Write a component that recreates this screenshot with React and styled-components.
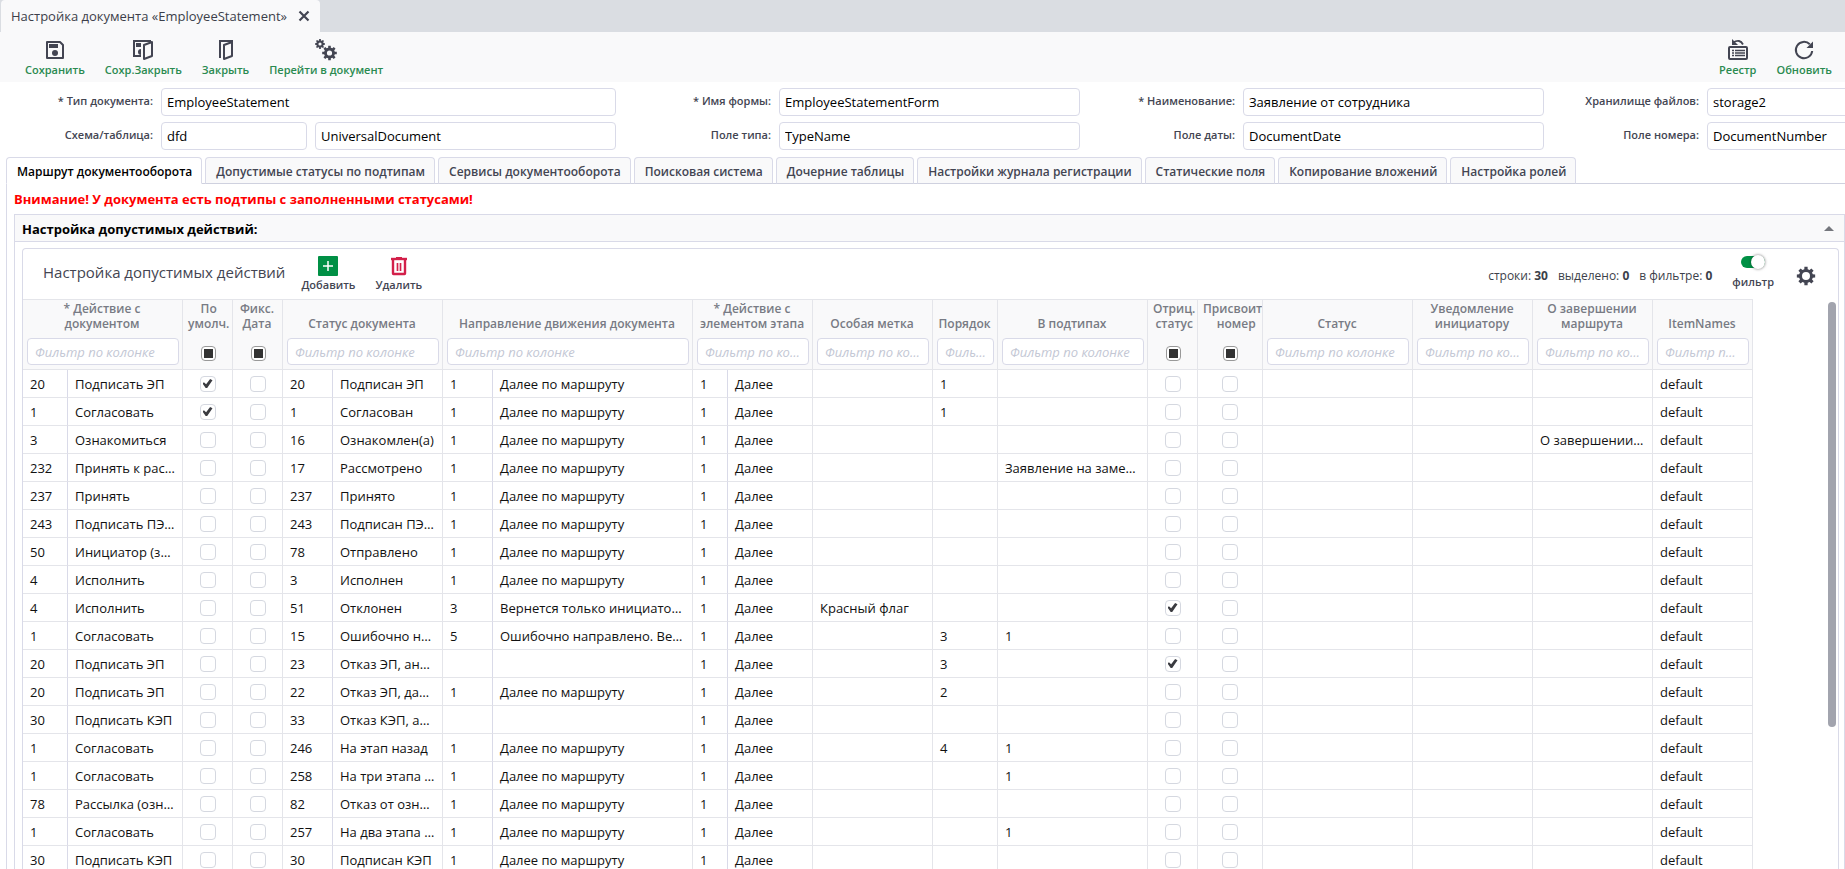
import React, { useId, useRef, useEffect, useState } from 'react';
import styled, { createGlobalStyle, css } from 'styled-components';

const GlobalStyle = createGlobalStyle`
  *, *::before, *::after { box-sizing: border-box; }
  body { margin: 0; background: #fff; color: #3c3f4a; font: 13px/18px "Open Sans", "Noto Sans", sans-serif; overflow: hidden; }
  button, input { font-family: inherit; }
`;

const line = '#d9dae8';
const gridLine = '#e4e5ea';
const ink = '#434552';
const shade = '#f9f9fa';

const Page = styled.div`
  display: flex;
  flex-direction: column;
  height: 100vh;
  overflow: hidden;
`;

/* ---------- window tab and toolbar ---------- */

const WindowTabs = styled.div`
  display: flex;
  flex: none;
  height: 32px;
  padding-left: 1px;
  background: #dadde2;
`;

const WindowTab = styled.div`
  display: flex;
  align-items: center;
  gap: 11px;
  padding: 0 10px;
  background: ${shade};
  border-radius: 4px 4px 0 0;
  white-space: nowrap;
`;

const CloseButton = styled.button`
  display: flex;
  padding: 0;
  border: 0;
  background: none;
  color: ${ink};
`;

const Toolbar = styled.div`
  display: flex;
  flex: none;
  justify-content: space-between;
  height: 50px;
  padding: 7px 3px 0 15px;
  background: ${shade};
`;

const ButtonGroup = styled.div`
  display: flex;
`;

const ToolButton = styled.button`
  display: flex;
  flex-direction: column;
  align-items: center;
  gap: 1px;
  padding: 0 10px;
  border: 0;
  background: none;
  color: ${p => (p.$plain ? ink : '#2a8a50')};
  font-size: 11px;
  font-weight: 600;
  line-height: 16px;
  white-space: nowrap;
  svg { color: ${ink}; }
`;

/* ---------- document form ---------- */

const Form = styled.form`
  display: grid;
  flex: none;
  grid-template-columns: 616px 464px 464px minmax(464px, 1fr);
  row-gap: 6px;
  padding: 6px 0 7px;
`;

const FieldBox = styled.div`
  display: flex;
  gap: 8px;
`;

const FieldLabel = styled.label`
  flex: none;
  width: ${p => (p.$first ? 153 : 155)}px;
  color: ${ink};
  font-size: 11px;
  font-weight: 600;
  line-height: 26px;
  text-align: right;
`;

const TextInput = styled.input`
  flex: ${p => (p.$width ? 'none' : 1)};
  width: ${p => (p.$width ? `${p.$width}px` : 'auto')};
  min-width: 0;
  height: 28px;
  padding: 0 5px;
  border: 1px solid ${line};
  border-radius: 4px;
  background: #fff;
  color: #000;
  font-size: 13px;
  outline: 0;
`;

/* ---------- tabs ---------- */

const TabList = styled.div`
  display: flex;
  flex: none;
  gap: 3px;
  height: 27px;
  margin-left: 6px;
  box-shadow: inset 0 -1px #cfd1df;
`;

const Tab = styled.button`
  padding: 2px 9px 0 10px;
  border: 1px solid ${line};
  border-bottom-color: #cfd1df;
  border-radius: 4px 4px 0 0;
  background: ${shade};
  color: ${ink};
  font-size: 12px;
  font-weight: 600;
  line-height: 24px;
  white-space: nowrap;
  ${p => p.$active && css`
    border-bottom-color: #fff;
    background: #fff;
    color: #000;
  `}
`;

const TabPanel = styled.div`
  display: flex;
  flex: 1;
  flex-direction: column;
  min-height: 0;
  margin-left: 6px;
  padding-left: 7px;
  border-left: 1px solid ${line};
`;

const Warning = styled.p`
  flex: none;
  height: 30px;
  margin: 0;
  color: #f00;
  font-weight: 700;
  line-height: 30px;
`;

const Section = styled.section`
  display: flex;
  flex: 1;
  flex-direction: column;
  min-height: 0;
  border: 1px solid ${line};
  border-bottom: 0;
`;

const SectionHeader = styled.header`
  display: flex;
  flex: none;
  align-items: center;
  justify-content: space-between;
  height: 27px;
  padding: 0 10px 0 7px;
  border-bottom: 1px solid ${line};
  background: ${shade};
`;

const SectionTitle = styled.h2`
  margin: 0;
  padding-top: 1px;
  color: #000;
  font-size: 13px;
  line-height: 18px;
`;

const Grid = styled.div`
  display: flex;
  flex: 1;
  flex-direction: column;
  min-height: 0;
  margin: 6px 5px 0 7px;
  border: 1px solid ${line};
  border-bottom: 0;
  border-radius: 4px 4px 0 0;
`;

const GridBar = styled.div`
  display: flex;
  flex: none;
  align-items: flex-start;
  height: 50px;
  padding: 7px 22px 0 20px;
`;

const GridTitle = styled.h3`
  margin: 0 6px 0 0;
  color: ${ink};
  font-size: 15px;
  font-weight: 400;
  line-height: 32px;
  white-space: nowrap;
`;

const GridStatus = styled.div`
  display: flex;
  gap: 10px;
  margin-left: auto;
  font-size: 12px;
  line-height: 40px;
  white-space: nowrap;
`;

const SwitchLabel = styled.label`
  display: flex;
  flex-direction: column;
  align-items: center;
  gap: 6px;
  margin: 0 22px 0 20px;
  color: ${ink};
  font-size: 11px;
  font-weight: 600;
  line-height: 16px;
`;

const Switch = styled.input`
  display: flex;
  align-items: center;
  justify-content: flex-end;
  appearance: none;
  width: 24px;
  height: 12px;
  margin: 0;
  border-radius: 6px;
  background: #009045;
  &::after {
    content: "";
    flex: none;
    width: 14px;
    height: 14px;
    border-radius: 50%;
    background: #fff;
    box-shadow: 0 0 3px #0008;
  }
`;

const IconButton = styled.button`
  display: flex;
  padding: ${p => (p.$low ? '10px 0 0' : '0')};
  border: 0;
  background: none;
  color: ${ink};
`;

/* ---------- table ---------- */

const GridBody = styled.div`
  display: flex;
  flex: 1;
  justify-content: space-between;
  min-height: 0;
  overflow: hidden;
`;

const Table = styled.table`
  flex: none;
  align-self: flex-start;
  width: 1730px;
  table-layout: fixed;
  border-spacing: 0;
`;

const HeadCell = styled.th`
  height: 71px;
  padding: 0 3px 4px 4px;
  border: solid ${gridLine};
  border-width: 1px 1px 1px 0;
  background: ${shade};
  color: #787b84;
  font-size: 12px;
  font-weight: 600;
  line-height: 15px;
  vertical-align: bottom;
  overflow: hidden;
`;

const HeadText = styled.div`
  min-width: min-content;
  margin: 0 3px 7px 1px;
  white-space: pre-line;
`;

const FilterSlot = styled.div`
  display: flex;
  align-items: center;
  justify-content: center;
  height: 27px;
  padding-top: ${p => (p.$check ? 4 : 0)}px;
`;

const FilterInput = styled.input`
  width: 100%;
  min-width: 0;
  height: 27px;
  padding: 0 6px 0 7px;
  border: 1px solid ${line};
  border-radius: 4px;
  background: #fff;
  font-size: 13px;
  text-overflow: ellipsis;
  outline: 0;
  &::placeholder { color: #c3c7d4; font-style: italic; opacity: 1; }
`;

const CheckBase = styled.input`
  display: flex;
  align-items: center;
  justify-content: center;
  appearance: none;
  width: 16px;
  height: 16px;
  margin: 0 auto;
  border: 1px solid #d5d8e0;
  border-radius: 4px;
  background: #fff;
  &:checked::after {
    content: "";
    width: 10px;
    height: 9px;
    background: #3a3b40;
    clip-path: polygon(0 51%, 14% 36%, 36% 58%, 76% 0, 100% 14%, 47% 100%, 32% 100%);
  }
  &:indeterminate {
    width: 15px;
    height: 15px;
    margin: 0;
    border-color: #999;
  }
  &:indeterminate::after {
    content: "";
    width: 9px;
    height: 9px;
    background: #333;
  }
`;

const Cell = styled.td`
  height: 28px;
  padding: ${p => (p.$check ? '0' : '1px 7px 0')};
  border: solid ${gridLine};
  border-width: 0 1px 1px 0;
  border-right-color: ${p => (p.$code ? line : gridLine)};
  color: #111;
  line-height: 18px;
  white-space: nowrap;
  overflow: hidden;
`;

const ScrollTrack = styled.div`
  flex: none;
  width: 10px;
  padding-top: 3px;
`;

const ScrollThumb = styled.div`
  width: 8px;
  height: 75%;
  border-radius: 4px;
  background: #a2a4ae;
`;

/* ---------- icons ---------- */

function gearPath(cx, cy, teeth, outer, inner, hole) {
  const pts = [];
  const step = (Math.PI * 2) / teeth;
  for (let i = 0; i < teeth; i++) {
    const a = i * step - Math.PI / 2;
    [[-0.31, inner], [-0.22, outer], [0.22, outer], [0.31, inner]].forEach(([o, r]) => {
      pts.push(`${(cx + r * Math.cos(a + o * step)).toFixed(2)} ${(cy + r * Math.sin(a + o * step)).toFixed(2)}`);
    });
  }
  return `M${pts.join('L')}ZM${cx - hole} ${cy}a${hole} ${hole} 0 1 0 ${hole * 2} 0a${hole} ${hole} 0 1 0 ${-hole * 2} 0Z`;
}

const Svg = ({ size = 22, children }) => (
  <svg width={size} height={size} viewBox={`0 0 ${size} ${size}`} fill="none" stroke="currentColor" strokeWidth="2" aria-hidden="true">
    {children}
  </svg>
);

const SaveIcon = () => (
  <Svg>
    <path d="M3 3H16L19 6V19H3Z" strokeLinejoin="round" />
    <path d="M5 5h9v4H5z" fill="currentColor" stroke="none" />
    <circle cx="11" cy="14" r="3" fill="currentColor" stroke="none" />
  </Svg>
);

const SaveCloseIcon = () => (
  <Svg>
    <path d="M19 2H2V17H9" />
    <path d="M4 4h5v4H4zM9 10a3 3 0 0 0 0 6z" fill="currentColor" stroke="none" />
    <path d="M12 6L20 3V17L12 20Z" fill="#f9f9fa" strokeLinejoin="round" />
  </Svg>
);

const DoorIcon = () => (
  <Svg>
    <path d="M5 19V2H18" />
    <path d="M9 6L17 3V17L9 20Z" strokeLinejoin="round" />
  </Svg>
);

const GearsIcon = () => (
  <Svg>
    <g fill="currentColor" stroke="none" fillRule="evenodd">
      <path d={gearPath(5, 5, 8, 5, 3.7, 1.6)} />
      <path d={gearPath(14.5, 14, 8, 7.4, 5.5, 2.6)} />
    </g>
  </Svg>
);

const RegistryIcon = () => (
  <Svg>
    <rect x="2" y="8" width="18" height="12" rx="1" />
    <path d="M5 11.5h2M8 11.5h10M5 14h2M8 14h10M5 16.5h2M8 16.5h10" strokeWidth="1.3" />
    <path d="M6 3.5Q13 -0.5 16 5.5" strokeWidth="1.8" />
    <path d="M5 0V6H11Z" fill="currentColor" stroke="none" />
  </Svg>
);

const RefreshIcon = () => (
  <Svg>
    <path d="M16.8 5.2A8.2 8.2 0 1 0 19.2 12" />
    <path d="M20 2.500V9H13.500Z" fill="currentColor" stroke="none" />
  </Svg>
);

const AddIcon = () => (
  <Svg size={20}>
    <rect width="20" height="20" rx="1" fill="#009045" stroke="none" />
    <path d="M10 5v10M5 10h10" stroke="#fff" strokeWidth="1.5" />
  </Svg>
);

const TrashIcon = () => (
  <Svg size={20}>
    <g stroke="#d3204a">
      <path d="M2 3H18" strokeWidth="2.400" />
      <path d="M7 2H13" />
      <path d="M4 4V17.500Q4 18 4.500 18H15.500Q16 18 16 17.500V4" strokeWidth="2.400" />
      <path d="M8.500 7V15M11.500 7V15" strokeWidth="1.700" />
    </g>
  </Svg>
);

const GearIcon = () => (
  <Svg size={20}>
    <path d={gearPath(10, 10, 8, 9.3, 7, 4)} fill="currentColor" stroke="none" fillRule="evenodd" />
  </Svg>
);

/* ---------- data ---------- */

const formFields = [
  [['* Тип документа:', ['EmployeeStatement']], ['* Имя формы:', ['EmployeeStatementForm']], ['* Наименование:', ['Заявление от сотрудника']], ['Хранилище файлов:', ['storage2']]],
  [['Схема/таблица:', ['dfd', 'UniversalDocument']], ['Поле типа:', ['TypeName']], ['Поле даты:', ['DocumentDate']], ['Поле номера:', ['DocumentNumber']]],
];

const tabs = [
  'Маршрут документооборота', 'Допустимые статусы по подтипам', 'Сервисы документооборота',
  'Поисковая система', 'Дочерние таблицы', 'Настройки журнала регистрации',
  'Статические поля', 'Копирование вложений', 'Настройка ролей',
];

const columns = [
  { title: '* Действие с\nдокументом', widths: [45, 115] },
  { title: 'По\nумолч.', widths: [50], check: true },
  { title: 'Фикс.\nДата', widths: [50], check: true },
  { title: 'Статус документа', widths: [50, 110] },
  { title: 'Направление движения документа', widths: [50, 200] },
  { title: '* Действие с\nэлементом этапа', widths: [35, 85] },
  { title: 'Особая метка', widths: [120] },
  { title: 'Порядок', widths: [65] },
  { title: 'В подтипах', widths: [150] },
  { title: 'Отриц.\nстатус', widths: [50], check: true },
  { title: 'Присвоить\nномер', widths: [65], check: true },
  { title: 'Статус', widths: [150] },
  { title: 'Уведомление\nинициатору', widths: [120] },
  { title: 'О завершении\nмаршрута', widths: [120] },
  { title: 'ItemNames', widths: [100] },
];

const row = (code, action, statusCode, status, dirCode, dir, extra = {}) => ({ code, action, statusCode, status, dirCode, dir, ...extra });
const onward = ['1', 'Далее по маршруту'];

const rows = [
  row('20', 'Подписать ЭП', '20', 'Подписан ЭП', ...onward, { byDefault: true, order: '1' }),
  row('1', 'Согласовать', '1', 'Согласован', ...onward, { byDefault: true, order: '1' }),
  row('3', 'Ознакомиться', '16', 'Ознакомлен(а)', ...onward, { finish: 'О завершении…' }),
  row('232', 'Принять к рас…', '17', 'Рассмотрено', ...onward, { subtypes: 'Заявление на заме…' }),
  row('237', 'Принять', '237', 'Принято', ...onward),
  row('243', 'Подписать ПЭ…', '243', 'Подписан ПЭ…', ...onward),
  row('50', 'Инициатор (з…', '78', 'Отправлено', ...onward),
  row('4', 'Исполнить', '3', 'Исполнен', ...onward),
  row('4', 'Исполнить', '51', 'Отклонен', '3', 'Вернется только инициато…', { mark: 'Красный флаг', negative: true }),
  row('1', 'Согласовать', '15', 'Ошибочно н…', '5', 'Ошибочно направлено. Ве…', { order: '3', subtypes: '1' }),
  row('20', 'Подписать ЭП', '23', 'Отказ ЭП, ан…', '', '', { order: '3', negative: true }),
  row('20', 'Подписать ЭП', '22', 'Отказ ЭП, да…', ...onward, { order: '2' }),
  row('30', 'Подписать КЭП', '33', 'Отказ КЭП, а…', '', ''),
  row('1', 'Согласовать', '246', 'На этап назад', ...onward, { order: '4', subtypes: '1' }),
  row('1', 'Согласовать', '258', 'На три этапа …', ...onward, { subtypes: '1' }),
  row('78', 'Рассылка (озн…', '82', 'Отказ от озн…', ...onward),
  row('1', 'Согласовать', '257', 'На два этапа …', ...onward, { subtypes: '1' }),
  row('30', 'Подписать КЭП', '30', 'Подписан КЭП', ...onward),
];

/* ---------- parts ---------- */

function Field({ label, values, first }) {
  const id = useId();
  return (
    <FieldBox>
      <FieldLabel htmlFor={id} $first={first}>{label}</FieldLabel>
      {values.map((v, i) => (
        <TextInput
          key={v}
          id={i === 0 ? id : undefined}
          aria-label={i > 0 ? label : undefined}
          defaultValue={v}
          $width={values.length > 1 && i === 0 ? 146 : 0}
        />
      ))}
    </FieldBox>
  );
}

function MixedCheck({ label }) {
  const ref = useRef(null);
  useEffect(() => { ref.current.indeterminate = true; }, []);
  return <CheckBase type="checkbox" ref={ref} aria-label={label} />;
}

function CheckCell({ checked = false, label }) {
  return <Cell $check><CheckBase type="checkbox" defaultChecked={checked} aria-label={label} /></Cell>;
}

function DataRow({ r }) {
  return (
    <tr>
      <Cell $code>{r.code}</Cell>
      <Cell>{r.action}</Cell>
      <CheckCell checked={r.byDefault} label="По умолч." />
      <CheckCell label="Фикс. Дата" />
      <Cell $code>{r.statusCode}</Cell>
      <Cell>{r.status}</Cell>
      <Cell $code>{r.dirCode}</Cell>
      <Cell>{r.dir}</Cell>
      <Cell $code>1</Cell>
      <Cell>Далее</Cell>
      <Cell>{r.mark}</Cell>
      <Cell>{r.order}</Cell>
      <Cell>{r.subtypes}</Cell>
      <CheckCell checked={r.negative} label="Отриц. статус" />
      <CheckCell label="Присвоить номер" />
      <Cell />
      <Cell />
      <Cell>{r.finish}</Cell>
      <Cell>default</Cell>
    </tr>
  );
}

export default function App() {
  const [active, setActive] = useState(0);
  return (
    <Page>
      <GlobalStyle />
      <WindowTabs>
        <WindowTab>
          Настройка документа «EmployeeStatement»
          <CloseButton type="button" aria-label="Закрыть вкладку">
            <Svg size={12}><path d="M1.500 1.500L10.500 10.500M10.500 1.500L1.500 10.500" strokeWidth="2.200" /></Svg>
          </CloseButton>
        </WindowTab>
      </WindowTabs>
      <Toolbar>
        <ButtonGroup>
          <ToolButton type="button"><SaveIcon />Сохранить</ToolButton>
          <ToolButton type="button"><SaveCloseIcon />Сохр.Закрыть</ToolButton>
          <ToolButton type="button"><DoorIcon />Закрыть</ToolButton>
          <ToolButton type="button"><GearsIcon />Перейти в документ</ToolButton>
        </ButtonGroup>
        <ButtonGroup>
          <ToolButton type="button"><RegistryIcon />Реестр</ToolButton>
          <ToolButton type="button"><RefreshIcon />Обновить</ToolButton>
        </ButtonGroup>
      </Toolbar>
      <Form>
        {formFields.flatMap(line => line.map(([label, values], i) => (
          <Field key={label} label={label} values={values} first={i === 0} />
        )))}
      </Form>
      <TabList role="tablist">
        {tabs.map((t, i) => (
          <Tab key={t} type="button" role="tab" aria-selected={i === active} $active={i === active} onClick={() => setActive(i)}>{t}</Tab>
        ))}
      </TabList>
      <TabPanel role="tabpanel">
        <Warning>Внимание! У документа есть подтипы с заполненными статусами!</Warning>
        <Section>
          <SectionHeader>
            <SectionTitle>Настройка допустимых действий:</SectionTitle>
            <IconButton type="button" aria-label="Свернуть">
              <svg width="10" height="5" viewBox="0 0 10 5" fill="#74767c"><path d="M0 5L5 0L10 5Z" /></svg>
            </IconButton>
          </SectionHeader>
          <Grid>
            <GridBar>
              <GridTitle>Настройка допустимых действий</GridTitle>
              <ToolButton type="button" $plain><AddIcon />Добавить</ToolButton>
              <ToolButton type="button" $plain><TrashIcon />Удалить</ToolButton>
              <GridStatus>
                <span>строки: <b>30</b></span>
                <span>выделено: <b>0</b></span>
                <span>в фильтре: <b>0</b></span>
              </GridStatus>
              <SwitchLabel>
                <Switch type="checkbox" role="switch" defaultChecked />
                фильтр
              </SwitchLabel>
              <IconButton type="button" $low aria-label="Настройки"><GearIcon /></IconButton>
            </GridBar>
            <GridBody>
              <Table>
                <colgroup>
                  {columns.flatMap(c => c.widths.map((w, i) => <col key={c.title + i} width={w} />))}
                </colgroup>
                <thead>
                  <tr>
                    {columns.map(c => (
                      <HeadCell key={c.title} colSpan={c.widths.length} scope="col">
                        <HeadText>{c.title}</HeadText>
                        <FilterSlot $check={c.check}>
                          {c.check
                            ? <MixedCheck label={c.title} />
                            : <FilterInput placeholder="Фильтр по колонке" aria-label={c.title} />}
                        </FilterSlot>
                      </HeadCell>
                    ))}
                  </tr>
                </thead>
                <tbody>
                  {rows.map((r, i) => <DataRow key={i} r={r} />)}
                </tbody>
              </Table>
              <ScrollTrack><ScrollThumb /></ScrollTrack>
            </GridBody>
          </Grid>
        </Section>
      </TabPanel>
    </Page>
  );
}
